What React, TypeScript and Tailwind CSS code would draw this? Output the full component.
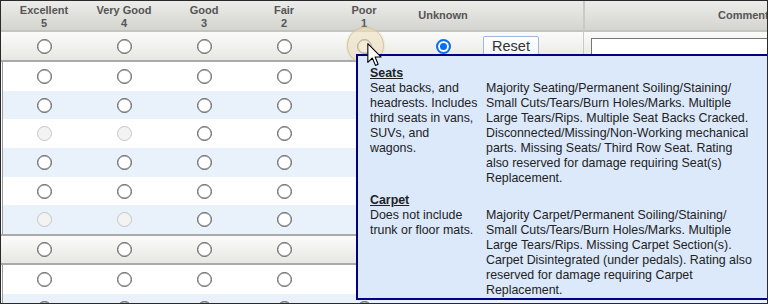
import React from "react";

const ratings = [
  { label: "Excellent", score: 5 },
  { label: "Very Good", score: 4 },
  { label: "Good", score: 3 },
  { label: "Fair", score: 2 },
  { label: "Poor", score: 1 },
];

type Row = { kind: "group" | "item"; stripe?: boolean; faded?: boolean; checked?: boolean };

const rows: Row[] = [
  { kind: "group", checked: true },
  { kind: "item" },
  { kind: "item", stripe: true },
  { kind: "item", faded: true },
  { kind: "item", stripe: true },
  { kind: "item" },
  { kind: "item", stripe: true, faded: true },
  { kind: "group" },
  { kind: "item" },
  { kind: "item", stripe: true },
];

const GRID = "grid grid-cols-[80px_80px_80px_80px_80px_78px_101px_1fr]";

function Radio({ disabled, checked, name }: { disabled?: boolean; checked?: boolean; name: string }) {
  return (
    <input
      type="radio"
      name={name}
      defaultChecked={checked}
      disabled={disabled}
      className="m-0 h-[15px] w-[15px] appearance-none rounded-full border border-[#5e5e5e] bg-white shadow-[inset_0_0_0_0.4px_#8a8a8a] checked:border-2 checked:border-[#0a6cf0] checked:shadow-[inset_0_0_0_2px_white,inset_0_0_0_8px_#0a6cf0] disabled:border-[#c6c6c6] disabled:bg-[#f3f3f3] disabled:shadow-none"
    />
  );
}

function Section({ title, left, right, last }: { title: string; left: string[]; right: string[]; last?: boolean }) {
  return (
    <div className={last ? "" : "mb-[7px]"}>
      <div className="font-bold underline">{title}</div>
      <div className="flex">
        <div className="w-[116px] shrink-0 whitespace-nowrap">
          {left.map((l) => (
            <div key={l}>{l}</div>
          ))}
        </div>
        <div className="whitespace-nowrap">
          {right.map((l) => (
            <div key={l}>{l}</div>
          ))}
        </div>
      </div>
    </div>
  );
}

export default function App() {
  return (
    <div className="relative h-[304px] w-[768px] overflow-hidden border border-[#2a2a2a] bg-white font-['Liberation_Sans',Arial,sans-serif]">
      {/* header */}
      <div className={`${GRID} h-[31px] border-b-2 border-[#c4c4c0] bg-gradient-to-b from-[#ececea] to-[#d4d4cf] pl-[3px] text-[11px] font-bold leading-[12.5px] text-[#555]`}>
        {ratings.map((r) => (
          <div key={r.label} className="flex flex-col items-center justify-center pt-[2px]">
            <span>{r.label}</span>
            <span>{r.score}</span>
          </div>
        ))}
        <div className="flex items-center justify-center">Unknown</div>
        <div />
        <div className="flex items-center border-l-2 border-[#c9c9c5] pl-[133px]">
          Comments
        </div>
      </div>

      {rows.map((row, i) => {
        const name = `row-${i}`;
        if (row.kind === "group") {
          return (
            <div
              key={i}
              className={`${GRID} h-[30px] border-b-2 border-[#aaaaaa] bg-gradient-to-b from-[#fbfbfa] to-[#e7e7e3] pl-[3px] ${i > 0 ? "h-[31px] border-t-2" : ""}`}
            >
              {ratings.map((r) => (
                <div key={r.label} className="flex items-center justify-center">
                  <Radio name={name} />
                </div>
              ))}
              <div className="flex items-center justify-center">
                <Radio name={name} checked={row.checked} />
              </div>
              <div className="flex items-center pl-[1px]">
                <button className="h-[21px] w-[56px] rounded-[2px] border border-[#9fb7dc] bg-gradient-to-b from-white to-[#f1f4f9] text-[14.5px] leading-none text-[#333]">
                  Reset
                </button>
              </div>
              <div className="flex items-center border-l border-[#c9c9c5] pl-[7px]">
                <input className="h-[17px] w-[300px] border border-[#767676] bg-white" />
              </div>
            </div>
          );
        }
        return (
          <div
            key={i}
            className={`${GRID} ml-[1px] h-[28.7px] border-l border-[#9a9a9a] pl-[1px] ${row.stripe ? "bg-[#e9f1fa]" : "bg-white"}`}
          >
            {ratings.map((r, j) => (
              <div key={r.label} className="flex items-center justify-center">
                <Radio name={name} disabled={row.faded && j < 2} />
              </div>
            ))}
          </div>
        );
      })}

      {/* hover highlight on the Poor radio */}
      <div className="absolute left-[346px] top-[26px] h-[37px] w-[37px] rounded-full border border-[#d3c59c] bg-[#ece0bb]/60 shadow-[0_0_2px_#d9cda8]" />

      {/* tooltip */}
      <div className="absolute left-[355px] top-[53px] w-[440px] border-2 border-[#000080] bg-[#dce9fb] pl-[12px] pt-[10px] text-[12.4px] leading-[15px] text-[#222]">
        <Section
          title="Seats"
          left={["Seat backs, and", "headrests. Includes", "third seats in vans,", "SUVs, and", "wagons."]}
          right={[
            "Majority Seating/Permanent Soiling/Staining/",
            "Small Cuts/Tears/Burn Holes/Marks. Multiple",
            "Large Tears/Rips. Multiple Seat Backs Cracked.",
            "Disconnected/Missing/Non-Working mechanical",
            "parts. Missing Seats/ Third Row Seat. Rating",
            "also reserved for damage requiring Seat(s)",
            "Replacement.",
          ]}
        />
        <Section
          title="Carpet"
          last
          left={["Does not include", "trunk or floor mats."]}
          right={[
            "Majority Carpet/Permanent Soiling/Staining/",
            "Small Cuts/Tears/Burn Holes/Marks. Multiple",
            "Large Tears/Rips. Missing Carpet Section(s).",
            "Carpet Disintegrated (under pedals). Rating also",
            "reserved for damage requiring Carpet",
            "Replacement.",
          ]}
        />
      </div>

      {/* mouse pointer */}
      <svg className="absolute left-[366px] top-[42px]" width="15" height="23" viewBox="0 0 12 19">
        <path d="M0.5 0.5 L0.5 16 L4.2 12.4 L6.8 18.5 L9 17.6 L6.5 11.6 L11.5 11.6 Z" fill="white" stroke="black" strokeWidth="0.9" strokeLinejoin="round" />
      </svg>
    </div>
  );
}
